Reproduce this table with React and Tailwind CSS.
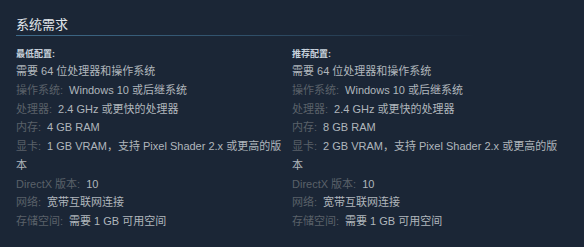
export default function App() {
  const font = { fontFamily: '"Liberation Sans", "Noto Sans CJK SC", sans-serif' };
  const cols = [
    { title: "最低配置:", mem: "4 GB RAM", gpu: "1 GB VRAM，支持 Pixel Shader 2.x 或更高的版本" },
    { title: "推荐配置:", mem: "8 GB RAM", gpu: "2 GB VRAM，支持 Pixel Shader 2.x 或更高的版本" },
  ];
  const Row = ({ label, value }) => (
    <li>
      <span className="text-[#5a6169] mr-[6px]">{label}</span>
      <span className="text-[#b0b6bc]">{value}</span>
    </li>
  );
  return (
    <div className="w-[584px] h-[247px] bg-[#1b2636] overflow-hidden" style={font}>
      <div className="pl-4 pt-[17px]">
        <div className="text-[13px] leading-[16px] text-[#e2e7ec] pb-[2px]">系统需求</div>
        <div className="h-px w-[460px] bg-gradient-to-r from-[#3f6b8a] via-[#30506a] to-transparent" />
        <div className="flex gap-[10px] pt-[11px]">
          {cols.map((c) => (
            <div key={c.title} className="w-[266px]">
              <div className="text-[9px] font-bold leading-[14px] text-[#c7d2dc] mb-px">{c.title}</div>
              <ul className="text-[11px] leading-[18.75px] text-[#b0b6bc]">
                <li>需要 64 位处理器和操作系统</li>
                <Row label="操作系统:" value="Windows 10 或后继系统" />
                <Row label="处理器:" value="2.4 GHz 或更快的处理器" />
                <Row label="内存:" value={c.mem} />
                <Row label="显卡:" value={c.gpu} />
                <Row label="DirectX 版本:" value="10" />
                <Row label="网络:" value="宽带互联网连接" />
                <Row label="存储空间:" value="需要 1 GB 可用空间" />
              </ul>
            </div>
          ))}
        </div>
      </div>
    </div>
  );
}
